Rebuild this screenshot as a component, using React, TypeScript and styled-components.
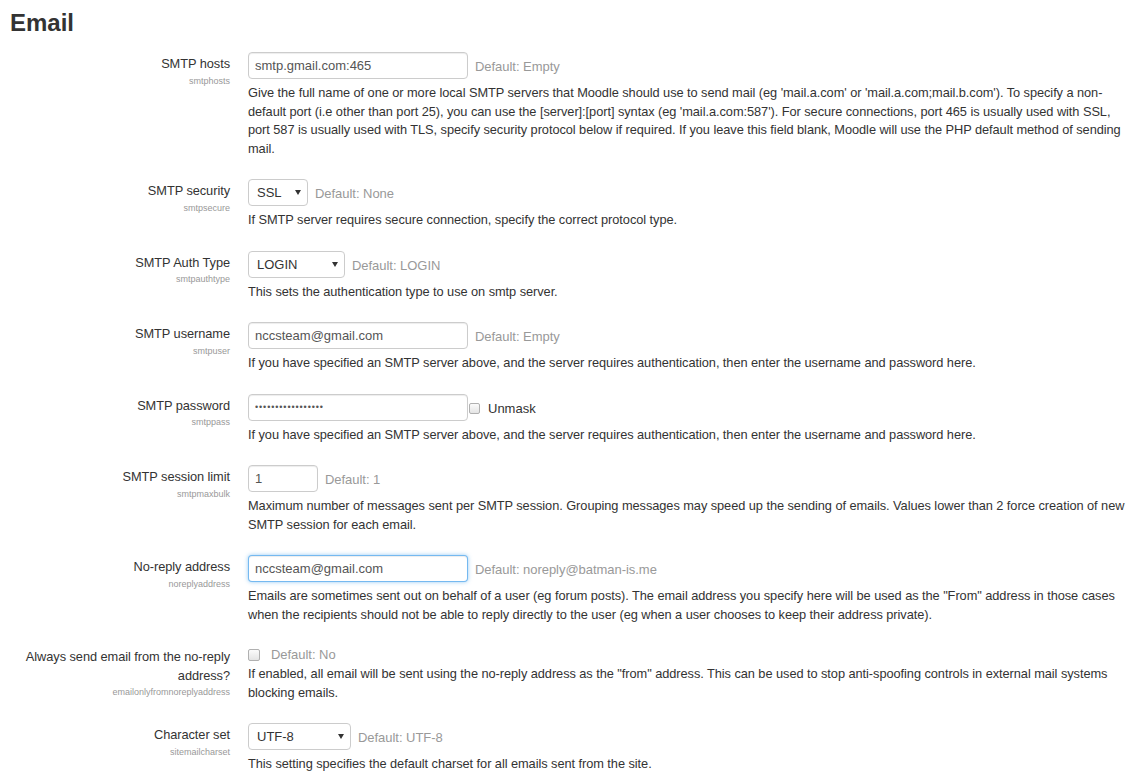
import React from "react";
import styled, { createGlobalStyle } from "styled-components";

const GlobalStyle = createGlobalStyle`
  html, body { margin: 0; padding: 0; background: #fff; }
  body {
    font-family: "Liberation Sans", Arial, Helvetica, sans-serif;
    font-size: 13px;
    color: #333;
  }
  * { box-sizing: border-box; }
`;

const Page = styled.div`
  padding: 0 2px 0 10px;
  width: 1132px;
`;

const Heading = styled.h2`
  margin: 9px 0 15px 0;
  font-size: 24px;
  font-weight: bold;
  line-height: normal;
  color: #333;
`;

const Row = styled.div`
  display: grid;
  grid-template-columns: 220px 1fr;
  column-gap: 18px;
  margin-bottom: 21px;
`;

const LabelCol = styled.div`
  text-align: right;
  padding-top: 3px;
`;

const Label = styled.label`
  display: block;
  font-size: 12.8px;
  letter-spacing: -0.06px;
  line-height: 18.5px;
  color: #333;
`;

const ShortName = styled.div`
  padding-top: 1px;
  font-size: 9px;
  line-height: 13px;
  color: #999;
`;

const ControlCol = styled.div`
  min-width: 0;
`;

const ControlLine = styled.div<{ $check?: boolean }>`
  display: flex;
  align-items: ${(p) => (p.$check ? "center" : "flex-start")};
  height: ${(p) => (p.$check ? "20px" : "27px")};
`;

const TextInput = styled.input<{ $w: number; $focus?: boolean }>`
  width: ${(p) => p.$w}px;
  height: 27px;
  padding: 0 6px;
  margin: 0;
  font-family: inherit;
  font-size: 13px;
  color: #555;
  background: #fff;
  border: 1px solid ${(p) => (p.$focus ? "rgba(82,168,236,0.8)" : "#ccc")};
  border-radius: 4px;
  box-shadow: ${(p) =>
    p.$focus
      ? "inset 0 1px 1px rgba(0,0,0,.075), 0 0 4px rgba(82,168,236,.6)"
      : "inset 0 1px 1px rgba(0,0,0,.075)"};
  outline: none;
`;

const PasswordInput = styled(TextInput)`
  font-size: 9px;
  letter-spacing: 0.9px;
`;

const SelectWrap = styled.div<{ $w: number }>`
  position: relative;
  width: ${(p) => p.$w}px;
  height: 27px;
`;

const Select = styled.select`
  width: 100%;
  height: 100%;
  appearance: none;
  -webkit-appearance: none;
  padding: 0 8px;
  margin: 0;
  font-family: inherit;
  font-size: 13px;
  color: #333;
  background: #fff;
  border: 1px solid #ccc;
  border-radius: 4px;
  outline: none;
`;

const Arrow = styled.svg`
  position: absolute;
  right: 7px;
  top: 11px;
  width: 6px;
  height: 5px;
  pointer-events: none;
`;

const DefaultText = styled.span<{ $check?: boolean }>`
  margin-left: ${(p) => (p.$check ? "11px" : "7px")};
  padding-top: ${(p) => (p.$check ? "0" : "6px")};
  line-height: 18.5px;
  font-size: 13px;
  letter-spacing: -0.04px;
  color: #999;
  white-space: nowrap;
`;

const CheckBox = styled.input`
  appearance: none;
  -webkit-appearance: none;
  width: 12px;
  height: 12px;
  margin: 0;
  flex: none;
  border: 1px solid #b0b0b0;
  border-radius: 2px;
  background: linear-gradient(#fbfbfb, #e4e4e4);
`;

const UnmaskBox = styled(CheckBox)`
  width: 11px;
  height: 11px;
  margin: 9px 0 0 1px;
`;

const UnmaskText = styled.span`
  margin-left: 8px;
  padding-top: 6px;
  line-height: 18.5px;
  color: #333;
`;

const Description = styled.div<{ $check?: boolean }>`
  margin-top: ${(p) => (p.$check ? "0" : "5px")};
  font-size: 12.8px;
  letter-spacing: -0.06px;
  line-height: 18.5px;
  color: #333;
`;

const SelectBox = ({ w, value }: { w: number; value: string }) => (
  <SelectWrap $w={w}>
    <Select defaultValue={value}>
      <option>{value}</option>
    </Select>
    <Arrow viewBox="0 0 6 5">
      <path d="M0 0 L6 0 L3 5 Z" fill="#333" />
    </Arrow>
  </SelectWrap>
);

type SettingProps = {
  label: string;
  short: string;
  check?: boolean;
  control: React.ReactNode;
  desc: string;
};

const Setting = ({ label, short, check, control, desc }: SettingProps) => (
  <Row>
    <LabelCol>
      <Label>{label}</Label>
      <ShortName>{short}</ShortName>
    </LabelCol>
    <ControlCol>
      <ControlLine $check={check}>{control}</ControlLine>
      <Description $check={check}>{desc}</Description>
    </ControlCol>
  </Row>
);

export default function App() {
  return (
    <>
      <GlobalStyle />
      <Page>
        <Heading>Email</Heading>
        <Setting
          label="SMTP hosts"
          short="smtphosts"
          control={
            <>
              <TextInput $w={220} defaultValue="smtp.gmail.com:465" />
              <DefaultText>Default: Empty</DefaultText>
            </>
          }
          desc="Give the full name of one or more local SMTP servers that Moodle should use to send mail (eg 'mail.a.com' or 'mail.a.com;mail.b.com'). To specify a non-default port (i.e other than port 25), you can use the [server]:[port] syntax (eg 'mail.a.com:587'). For secure connections, port 465 is usually used with SSL, port 587 is usually used with TLS, specify security protocol below if required. If you leave this field blank, Moodle will use the PHP default method of sending mail."
        />
        <Setting
          label="SMTP security"
          short="smtpsecure"
          control={
            <>
              <SelectBox w={60} value="SSL" />
              <DefaultText>Default: None</DefaultText>
            </>
          }
          desc="If SMTP server requires secure connection, specify the correct protocol type."
        />
        <Setting
          label="SMTP Auth Type"
          short="smtpauthtype"
          control={
            <>
              <SelectBox w={97} value="LOGIN" />
              <DefaultText>Default: LOGIN</DefaultText>
            </>
          }
          desc="This sets the authentication type to use on smtp server."
        />
        <Setting
          label="SMTP username"
          short="smtpuser"
          control={
            <>
              <TextInput $w={220} defaultValue="nccsteam@gmail.com" />
              <DefaultText>Default: Empty</DefaultText>
            </>
          }
          desc="If you have specified an SMTP server above, and the server requires authentication, then enter the username and password here."
        />
        <Setting
          label="SMTP password"
          short="smtppass"
          control={
            <>
              <PasswordInput $w={220} type="password" defaultValue="abcdefghijklmnopq" />
              <UnmaskBox type="checkbox" />
              <UnmaskText>Unmask</UnmaskText>
            </>
          }
          desc="If you have specified an SMTP server above, and the server requires authentication, then enter the username and password here."
        />
        <Setting
          label="SMTP session limit"
          short="smtpmaxbulk"
          control={
            <>
              <TextInput $w={70} defaultValue="1" />
              <DefaultText>Default: 1</DefaultText>
            </>
          }
          desc="Maximum number of messages sent per SMTP session. Grouping messages may speed up the sending of emails. Values lower than 2 force creation of new SMTP session for each email."
        />
        <Setting
          label="No-reply address"
          short="noreplyaddress"
          control={
            <>
              <TextInput $w={220} $focus defaultValue="nccsteam@gmail.com" />
              <DefaultText>Default: noreply@batman-is.me</DefaultText>
            </>
          }
          desc={'Emails are sometimes sent out on behalf of a user (eg forum posts). The email address you specify here will be used as the "From" address in those cases when the recipients should not be able to reply directly to the user (eg when a user chooses to keep their address private).'}
        />
        <Setting
          label="Always send email from the no-reply address?"
          short="emailonlyfromnoreplyaddress"
          check
          control={
            <>
              <CheckBox type="checkbox" />
              <DefaultText $check>Default: No</DefaultText>
            </>
          }
          desc={'If enabled, all email will be sent using the no-reply address as the "from" address. This can be used to stop anti-spoofing controls in external mail systems blocking emails.'}
        />
        <Setting
          label="Character set"
          short="sitemailcharset"
          control={
            <>
              <SelectBox w={103} value="UTF-8" />
              <DefaultText>Default: UTF-8</DefaultText>
            </>
          }
          desc="This setting specifies the default charset for all emails sent from the site."
        />
      </Page>
    </>
  );
}
